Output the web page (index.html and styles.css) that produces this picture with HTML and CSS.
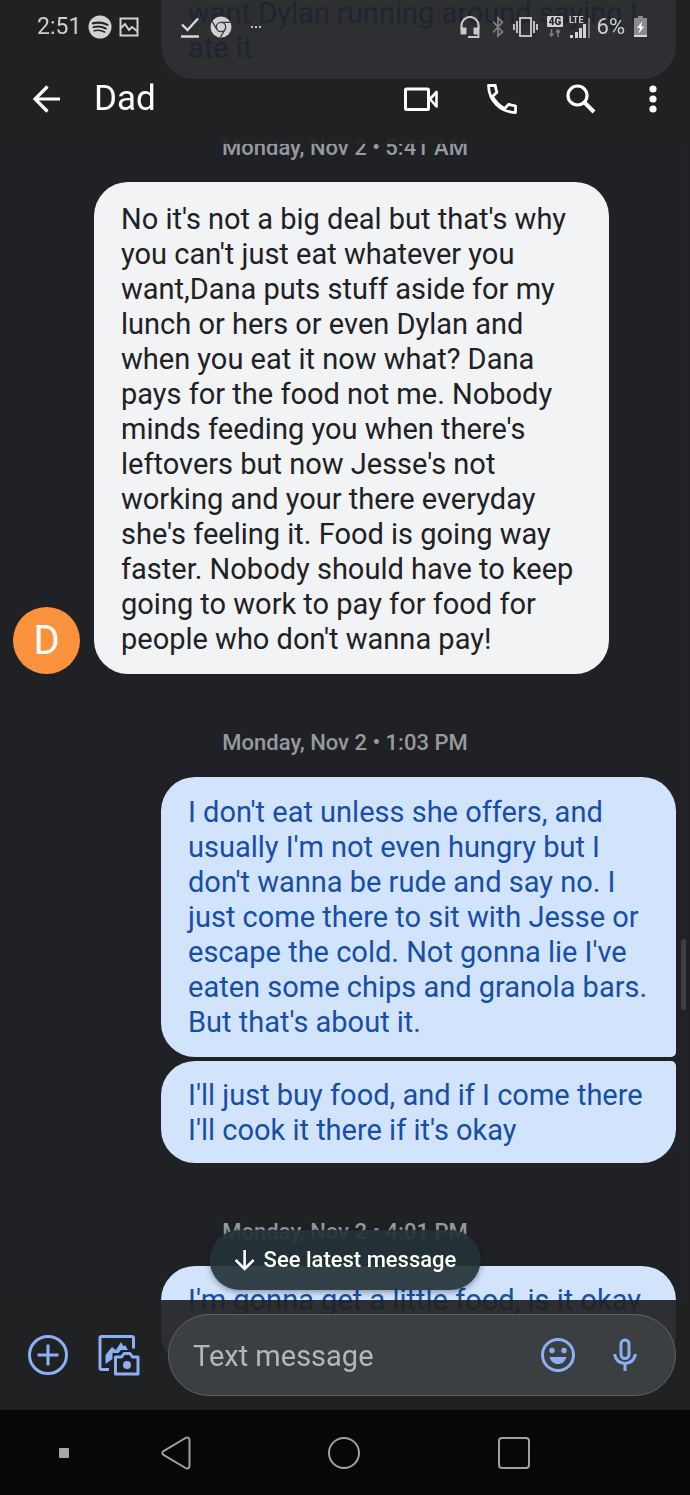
FILE: index.html
```html
<!DOCTYPE html>
<html lang="en">
<head>
<meta charset="utf-8">
<meta name="viewport" content="width=device-width, initial-scale=1">
<title>Dad</title>
<link rel="stylesheet" href="styles.css">
</head>
<body>
<header class="top">
  <div class="status">
    <div class="status-group">
      <span class="clock">2:51</span>
      <svg class="ico-spotify" width="24" height="24" viewBox="0 0 24 24"><circle cx="12" cy="12" r="11.5" fill="#d2d2d4"/><g fill="none" stroke="#25262a" stroke-linecap="round"><path d="M4.8 8.4c5-1.4 10.300-.9 14.700 1.500" stroke-width="2.200"/><path d="M5.500 12.200c4.300-1.200 8.600-.7 12.500 1.400" stroke-width="1.900"/><path d="M6.200 15.800c3.600-.9 7.100-.6 10.400 1.200" stroke-width="1.600"/></g></svg>
      <svg width="20" height="20" viewBox="0 0 20 20" fill="none" stroke="#d2d2d4" stroke-width="2"><path d="M1.500 1.500h17v17h-17z"/><path d="M2 11l4-4 4 6 3-3 5 4"/></svg>
      <svg class="ico-check" width="18" height="22" viewBox="0 0 18 22" fill="none" stroke="#d8d8da" stroke-width="2.400"><path d="M1 8.500l5.500 5.500L17 2.500M0 20.500h18"/></svg>
      <svg class="ico-chrome" width="22" height="22" viewBox="0 0 22 22"><circle cx="11" cy="11" r="10.500" fill="#d2d2d4"/><g fill="none" stroke="#36383d" stroke-width="1.300"><circle cx="11" cy="11" r="4.700"/><path d="M11 6.300h9.500M6.900 13.300L2.200 5.300M15.100 13.300l-4.600 8"/></g></svg>
      <svg class="ico-more" width="10" height="4" viewBox="0 0 10 4" fill="#c4c4c6"><path d="M0 1h2v2H0zM4 1h2v2H4zM8 1h2v2H8z"/></svg>
    </div>
    <div class="status-group status-right">
      <svg width="20" height="22" viewBox="0 0 20 22" fill="#c9c9cb"><path d="M1.500 13V9.500a8.500 8.500 0 0 1 17 0V13" fill="none" stroke="#c9c9cb" stroke-width="2.200"/><rect x=".5" y="11.500" width="6" height="7" rx="1"/><rect x="13.500" y="11.500" width="6" height="7" rx="1"/><path d="M18.500 18v3H8" fill="none" stroke="#c9c9cb" stroke-width="1.800"/></svg>
      <svg class="gap-12" width="12" height="22" viewBox="0 0 12 22" fill="none" stroke="#7d7e81" stroke-width="1.800"><path d="M1 5.500l9.500 10.500L6 20V2l4.500 4L1 16.500"/></svg>
      <svg class="gap-9" width="25" height="22" viewBox="0 0 25 22" fill="none" stroke="#bdbdbf" stroke-width="2"><rect x="7" y="2" width="11" height="18"/><path d="M4 5v12M1 8v6M21 5v12M24 8v6"/></svg>
      <svg class="gap-9" width="16" height="22" viewBox="0 0 16 22"><rect y="0" width="16" height="11" rx="1" fill="#d2d2d4"/><text x="8" y="9" class="tag-dark" text-anchor="middle">4G</text><g fill="none" stroke="#7d7e81" stroke-width="1.500"><path d="M4.500 13v7M2.500 17.500l2 2.500 2-2.500M11 21v-7M9 16.500l2-2.500 2 2.500"/></g></svg>
      <svg class="gap-6" width="22" height="24" viewBox="0 0 22 24"><text x="0" y="8" class="tag-light">LTE</text><g fill="#d2d2d4"><path d="M1 20h3v3H1zM6 17h3v6H6zM10 13h3v10h-3zM14 9h3v14h-3z"/><path d="M19 3h2v20h-2z" fill="#77787b"/></g></svg>
      <span class="battery-text gap-6">6%</span>
      <svg class="gap-9" width="13" height="22" viewBox="0 0 13 22"><path d="M4 0h5v2h4v17H0V2h4z" fill="#8a8b8e"/><path d="M0 19h13v2H0z" fill="#d8d8da"/><path d="M8.500 5L3 12h3l-1.500 6L10 10.500H7z" fill="#fff"/></svg>
    </div>
  </div>
  <div class="appbar">
    <button class="icon-btn" aria-label="Back"><svg width="28" height="28" viewBox="0 0 28 28" fill="none" stroke="#fff" stroke-width="3.200"><path d="M27 14H2.500M14.500 1.500L2 14l12.500 12.500"/></svg></button>
    <h1 class="contact">Dad</h1>
    <button class="icon-btn" aria-label="Video call"><svg width="34" height="24" viewBox="0 0 34 24" fill="none" stroke="#fff" stroke-width="3" stroke-linejoin="round"><rect x="1.500" y="2" width="23" height="20.500" rx="1"/><path d="M26 12l6.500-7v14.500z" stroke-width="2.600"/></svg></button>
    <button class="icon-btn act-phone" aria-label="Call"><svg width="32" height="32" viewBox="0 0 32 32" fill="none" stroke="#fff" stroke-width="2.800" stroke-linejoin="round"><path d="M2.500 2.500h6.800c.3 2.700.8 4.700 1.600 6.700L6.500 13.400C9.300 19 13 22.700 18.600 25.500l4.200-4.300c2 .8 4 1.300 6.700 1.600v6.700C14 29 3 18 2.500 2.500z"/></svg></button>
    <button class="icon-btn act-search" aria-label="Search"><svg width="30" height="30" viewBox="0 0 30 30" fill="none" stroke="#fff"><circle cx="11.500" cy="11.500" r="9.500" stroke-width="3.200"/><path d="M18.500 18.500l9.500 9.500" stroke-width="4"/></svg></button>
    <button class="icon-btn act-more" aria-label="More options"><svg width="8" height="28" viewBox="0 0 8 28" fill="#fff"><circle cx="4" cy="4" r="3.600"/><circle cx="4" cy="14" r="3.600"/><circle cx="4" cy="24" r="3.600"/></svg></button>
  </div>
</header>

<main class="thread">
  <div class="row out"><p class="bubble cut-top">want Dylan running around saying I ate it</p></div>
  <p class="date">Monday, Nov 2 • 5:41 AM</p>
  <div class="row in">
    <span class="avatar">D</span>
    <p class="bubble">No it's not a big deal but that's why you can't just eat whatever you want,Dana puts stuff aside for my lunch or hers or even Dylan and when you eat it now what? Dana pays for the food not me. Nobody minds feeding you when there's leftovers but now Jesse's not working and your there everyday she's feeling it. Food is going way faster. Nobody should have to keep going to work to pay for food for people who don't wanna pay!</p>
  </div>
  <p class="date">Monday, Nov 2 • 1:03 PM</p>
  <div class="row out"><p class="bubble group-first">I don't eat unless she offers, and usually I'm not even hungry but I don't wanna be rude and say no. I just come there to sit with Jesse or escape the cold. Not gonna lie I've eaten some chips and granola bars. But that's about it.</p></div>
  <div class="row out"><p class="bubble group-last">I'll just buy food, and if I come there I'll cook it there if it's okay</p></div>
  <p class="date">Monday, Nov 2 • 4:01 PM</p>
  <div class="row out"><p class="bubble cut-bottom">I'm gonna get a little food, is it okay</p></div>
</main>

<div class="scrollbar"><div class="thumb"></div></div>

<footer class="bottom">
  <button class="latest"><svg width="22" height="22" viewBox="0 0 22 22" fill="none" stroke="#fff" stroke-width="2.600"><path d="M11 1v19M2 11l9 9 9-9"/></svg>See latest message</button>
  <form class="compose">
    <button type="button" class="icon-btn" aria-label="Add"><svg width="40" height="40" viewBox="0 0 40 40" fill="none" stroke="#8ab0f6" stroke-width="3"><circle cx="20" cy="20" r="18.500"/><path d="M20 9.500v21M9.500 20h21"/></svg></button>
    <button type="button" class="icon-btn act-gallery" aria-label="Gallery"><svg width="42" height="42" viewBox="0 0 42 42" fill="none" stroke="#8ab0f6" stroke-width="3"><path d="M11 35.500H3.500a1.500 1.500 0 0 1-1.500-1.500V4a1.500 1.500 0 0 1 1.500-1.500H34A1.500 1.500 0 0 1 35.500 4v10.500"/><path d="M7.500 30V21l6.500-8 4 3 5-8 2.500 4.500 1.500-1.500 3 5h-7l-2.500 3h-6v6z" fill="#8ab0f6" stroke="none"/><path d="M18 23h5.500l2.500-3.500h6l2.500 3.500H40v17H17.500V23z" stroke-linejoin="round"/><circle cx="29" cy="31" r="4" fill="#8ab0f6" stroke="none"/></svg></button>
    <div class="field">
      <input class="text" type="text" placeholder="Text message" aria-label="Text message">
      <button type="button" class="icon-btn" aria-label="Emoji"><svg width="34" height="34" viewBox="0 0 34 34" fill="#8ab0f6"><circle cx="17" cy="17" r="15.500" fill="none" stroke="#8ab0f6" stroke-width="3"/><circle cx="11" cy="12.500" r="2.700"/><circle cx="23" cy="12.500" r="2.700"/><path d="M8.500 19h17c-1.300 4.500-4.500 7-8.500 7s-7.200-2.500-8.500-7z"/></svg></button>
      <button type="button" class="icon-btn act-mic" aria-label="Voice message"><svg width="24" height="34" viewBox="0 0 24 34" fill="none" stroke="#8ab0f6" stroke-width="3"><rect x="8" y="2" width="8" height="18.500" rx="4"/><path d="M1.700 16c.5 6 5 9.500 10.300 9.500s9.800-3.500 10.300-9.500M12 25.500V33"/></svg></button>
    </div>
  </form>
  <nav class="navbar">
    <button class="icon-btn" aria-label="Hide navigation bar"><svg width="10" height="10" viewBox="0 0 10 10"><rect width="10" height="10" rx="1" fill="#a6a6a6"/></svg></button>
    <button class="icon-btn" aria-label="Back"><svg width="30" height="34" viewBox="0 0 30 34" fill="none" stroke="#a0a0a0" stroke-width="2"><path d="M24.500 2L2.500 15.200a2 2 0 0 0 0 3.600L24.500 32c2 1.200 4 .3 4-2V4c0-2.300-2-3.200-4-2z"/></svg></button>
    <button class="icon-btn" aria-label="Home"><svg width="32" height="32" viewBox="0 0 32 32" fill="none" stroke="#a0a0a0" stroke-width="2"><circle cx="16" cy="16" r="15"/></svg></button>
    <button class="icon-btn" aria-label="Recent apps"><svg width="32" height="32" viewBox="0 0 32 32" fill="none" stroke="#a0a0a0" stroke-width="2"><rect x="1" y="1" width="30" height="30" rx="3"/></svg></button>
  </nav>
</footer>
</body>
</html>
```
FILE: styles.css
```css
* { box-sizing: border-box; }

body {
  margin: 0;
  background: #202124;
  color: #fff;
  font-family: Roboto, "Liberation Sans", sans-serif;
}

svg { display: block; flex: none; }

.icon-btn {
  display: flex;
  flex: none;
  padding: 0;
  border: 0;
  background: none;
}

/* Top bars */
.top {
  position: fixed;
  z-index: 2;
  top: 0;
  left: 0;
  right: 0;
  height: 144px;
  background: rgba(32, 33, 36, 0.93);
}

.status {
  display: flex;
  justify-content: space-between;
  align-items: center;
  height: 54px;
  padding: 0 43px 0 37px;
  color: #cfcfd1;
  font-size: 23px;
  line-height: 28px;
}
.status-group { display: flex; align-items: center; }
.ico-spotify { margin: 0 7px; }
.ico-check { margin-left: 42px; }
.ico-chrome { margin-left: 11px; }
.ico-more { margin-left: 19px; }
.gap-12 { margin-left: 12px; }
.gap-9 { margin-left: 9px; }
.gap-6 { margin-left: 6px; }
.battery-text { font-size: 22px; }
.tag-dark { font-size: 10px; font-weight: 900; fill: #25262a; }
.tag-light { font-size: 9px; font-weight: 700; fill: #c9c9cb; }

.appbar {
  display: flex;
  align-items: center;
  height: 90px;
  padding: 0 33px 0 33px;
}
.contact {
  flex: 1;
  margin: 0 0 0 33px;
  font-size: 35px;
  font-weight: 400;
  line-height: 40px;
}
.act-phone { margin-left: 48px; }
.act-search { margin-left: 48px; }
.act-more { margin-left: 53px; }

/* Conversation, scrolled part-way through its first bubble */
.thread { margin-top: -4px; font-size: 29px; line-height: 35px; }

.row { display: flex; align-items: flex-end; padding-right: 14px; }
.row.out { padding-left: 161px; }
.row.in { gap: 14px; padding-left: 13px; padding-right: 81px; }

.bubble {
  flex: 1;
  margin: 0;
  padding: 18px 27px 17px;
  border-radius: 34px;
  background: #f1f3f4;
  color: #202124;
}
.row.in .bubble { padding: 20px 27px 17px; }
.out .bubble { background: #d2e3fc; color: #174ea6; }
.out .bubble.cut-top {
  padding: 0 27px 13px;
  border-top-left-radius: 0;
  border-top-right-radius: 0;
}
.bubble.group-first { margin-bottom: 4px; border-bottom-right-radius: 5px; }
.bubble.group-last { padding: 17px 27px 15px; border-top-right-radius: 5px; }
.bubble.cut-bottom { min-height: 102px; padding-top: 17px; }

.avatar {
  display: flex;
  flex: none;
  align-items: center;
  justify-content: center;
  width: 67px;
  height: 67px;
  border-radius: 50%;
  background: #fd923e;
  color: #fff;
  font-size: 40px;
}

.date {
  margin: 0;
  padding: 55px 0 20px;
  color: #969a9f;
  font-size: 22px;
  font-weight: 500;
  line-height: 28px;
  text-align: center;
}

.scrollbar {
  position: fixed;
  z-index: 1;
  top: 150px;
  right: 4px;
  bottom: 90px;
  width: 5px;
  border-right: 1px solid #26272a;
}
.thumb {
  width: 5px;
  height: 71px;
  margin-top: 789px;
  border-radius: 3px;
  background: #3f3f43;
}

/* Bottom bars */
.bottom {
  position: fixed;
  z-index: 2;
  left: 0;
  right: 0;
  bottom: 0;
}

.latest {
  position: absolute;
  bottom: 205px;
  left: 50%;
  display: flex;
  align-items: center;
  gap: 8px;
  height: 60px;
  padding: 0 24px;
  border: 0;
  border-radius: 30px;
  background: rgba(36, 50, 56, 0.92);
  box-shadow: 0 2px 6px rgba(0, 0, 0, 0.35);
  color: #fff;
  font: 500 22px/28px Roboto, "Liberation Sans", sans-serif;
  white-space: nowrap;
  transform: translateX(-50%);
}

.compose {
  display: flex;
  align-items: center;
  height: 110px;
  padding: 0 14px 0 28px;
  background: rgba(32, 33, 36, 0.93);
}
.act-gallery { margin: 0 28px 0 30px; }

.field {
  display: flex;
  flex: 1;
  align-items: center;
  min-width: 0;
  height: 82px;
  padding: 0 38px 0 24px;
  border: 1px solid #5f6164;
  border-radius: 41px;
  background: #3c3f42;
}
.text {
  flex: 1;
  min-width: 0;
  padding: 2px 0 0;
  border: 0;
  outline: 0;
  background: none;
  color: #fff;
  font: 400 29px/36px Roboto, "Liberation Sans", sans-serif;
}
.text::placeholder { color: #b4b6b9; opacity: 1; }
.act-mic { margin-left: 38px; }

.navbar {
  display: grid;
  grid-template-columns: 128fr 96fr 240fr 100fr 126fr;
  align-items: center;
  justify-items: center;
  height: 85px;
  background: #070707;
}
```
